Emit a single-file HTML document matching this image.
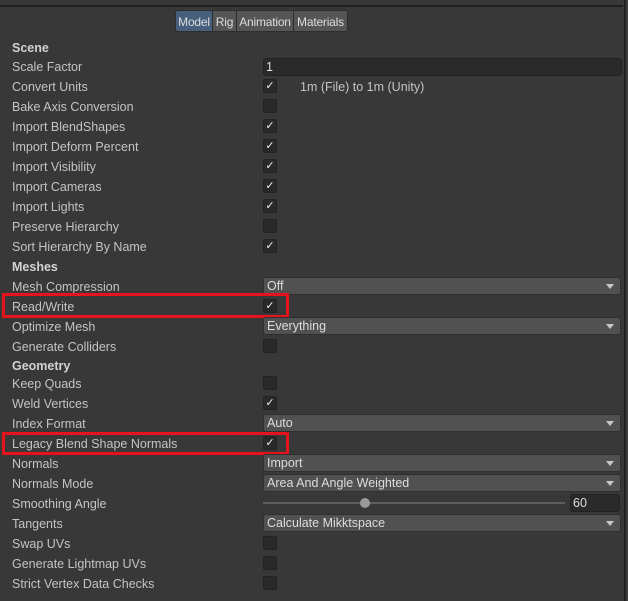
<!DOCTYPE html>
<html><head><style>
body{margin:0;width:628px;height:601px;background:#383838;position:relative;overflow:hidden;font-family:"Liberation Sans",sans-serif;font-size:12.5px;color:#c4c4c4}
.a{position:absolute}
.l{position:absolute;left:12px;line-height:14px;margin-top:1px}
.b{font-weight:bold;color:#d2d2d2}
.cb{position:absolute;left:263px;width:12px;height:12px;background:#292929;border:1px solid #222;border-radius:2px;color:#eee;font-size:11px;line-height:12px;text-align:center}
.dd{position:absolute;left:263px;width:353px;height:16px;background:#515151;border:1px solid #2f2f2f;border-radius:3px;color:#ddd;line-height:17px;padding-left:3px;box-sizing:content-box}
.dd:after{content:"";position:absolute;right:6px;top:6px;border-left:4px solid transparent;border-right:4px solid transparent;border-top:5px solid #c8c8c8}
.red{position:absolute;left:2px;width:281px;border:3px solid #e5141c}
.tab{position:absolute;top:10px;height:21px;background:#555;border:1px solid #2e2e2e;color:#ddd;line-height:22px;text-align:center;font-size:12px;letter-spacing:-0.2px;box-sizing:border-box;height:22px}
</style></head><body>
<div class="a" style="left:0;top:5px;width:623px;height:2px;background:#1f1f1f"></div>
<div class="a" style="left:624px;top:0;width:2px;height:601px;background:#232323"></div>
<div class="a" style="left:626px;top:0;width:2px;height:601px;background:#3e3e3e"></div>
<div class="tab" style="left:175px;width:38px;background:#46607c;border-radius:3px 0 0 3px">Model</div>
<div class="tab" style="left:212px;width:25px">Rig</div>
<div class="tab" style="left:236px;width:58px">Animation</div>
<div class="tab" style="left:293px;width:55px;border-radius:0 3px 3px 0">Materials</div>

<div class="l b" style="top:40px">Scene</div>
<div class="l" style="top:59px">Scale Factor</div>
<div class="a" style="left:263px;top:58px;width:355px;height:16px;background:#2a2a2a;border:1px solid #222;border-radius:3px;color:#ddd;line-height:17px;padding-left:2px">1</div>
<div class="l" style="top:79px">Convert Units</div><div class="cb" style="top:79px">✓</div>
<div class="a" style="left:300px;top:80px;line-height:14px">1m (File) to 1m (Unity)</div>
<div class="l" style="top:99px">Bake Axis Conversion</div><div class="cb" style="top:99px"></div>
<div class="l" style="top:119px">Import BlendShapes</div><div class="cb" style="top:119px">✓</div>
<div class="l" style="top:139px">Import Deform Percent</div><div class="cb" style="top:139px">✓</div>
<div class="l" style="top:159px">Import Visibility</div><div class="cb" style="top:159px">✓</div>
<div class="l" style="top:179px">Import Cameras</div><div class="cb" style="top:179px">✓</div>
<div class="l" style="top:199px">Import Lights</div><div class="cb" style="top:199px">✓</div>
<div class="l" style="top:219px">Preserve Hierarchy</div><div class="cb" style="top:219px"></div>
<div class="l" style="top:239px">Sort Hierarchy By Name</div><div class="cb" style="top:239px">✓</div>
<div class="l b" style="top:259px">Meshes</div>
<div class="l" style="top:279px">Mesh Compression</div><div class="dd" style="top:277px">Off</div>
<div class="l" style="top:299px">Read/Write</div><div class="cb" style="top:299px">✓</div>
<div class="red" style="top:293px;height:19px"></div>
<div class="l" style="top:319px">Optimize Mesh</div><div class="dd" style="top:317px">Everything</div>
<div class="l" style="top:339px">Generate Colliders</div><div class="cb" style="top:339px"></div>
<div class="l b" style="top:358px">Geometry</div>
<div class="l" style="top:376px">Keep Quads</div><div class="cb" style="top:376px"></div>
<div class="l" style="top:396px">Weld Vertices</div><div class="cb" style="top:396px">✓</div>
<div class="l" style="top:416px">Index Format</div><div class="dd" style="top:414px">Auto</div>
<div class="l" style="top:436px">Legacy Blend Shape Normals</div><div class="cb" style="top:436px">✓</div>
<div class="red" style="top:432px;height:17px"></div>
<div class="l" style="top:456px">Normals</div><div class="dd" style="top:454px">Import</div>
<div class="l" style="top:476px">Normals Mode</div><div class="dd" style="top:474px">Area And Angle Weighted</div>
<div class="l" style="top:496px">Smoothing Angle</div>
<div class="a" style="left:263px;top:502px;width:302px;height:2px;background:#5e5e5e"></div>
<div class="a" style="left:360px;top:498px;width:10px;height:10px;border-radius:50%;background:#999"></div>
<div class="a" style="left:570px;top:494px;width:46px;height:16px;background:#2a2a2a;border:1px solid #222;border-radius:3px;color:#ddd;line-height:17px;padding-left:2px">60</div>
<div class="l" style="top:516px">Tangents</div><div class="dd" style="top:514px">Calculate Mikktspace</div>
<div class="l" style="top:536px">Swap UVs</div><div class="cb" style="top:536px"></div>
<div class="l" style="top:556px">Generate Lightmap UVs</div><div class="cb" style="top:556px"></div>
<div class="l" style="top:576px">Strict Vertex Data Checks</div><div class="cb" style="top:576px"></div>
</body></html>
